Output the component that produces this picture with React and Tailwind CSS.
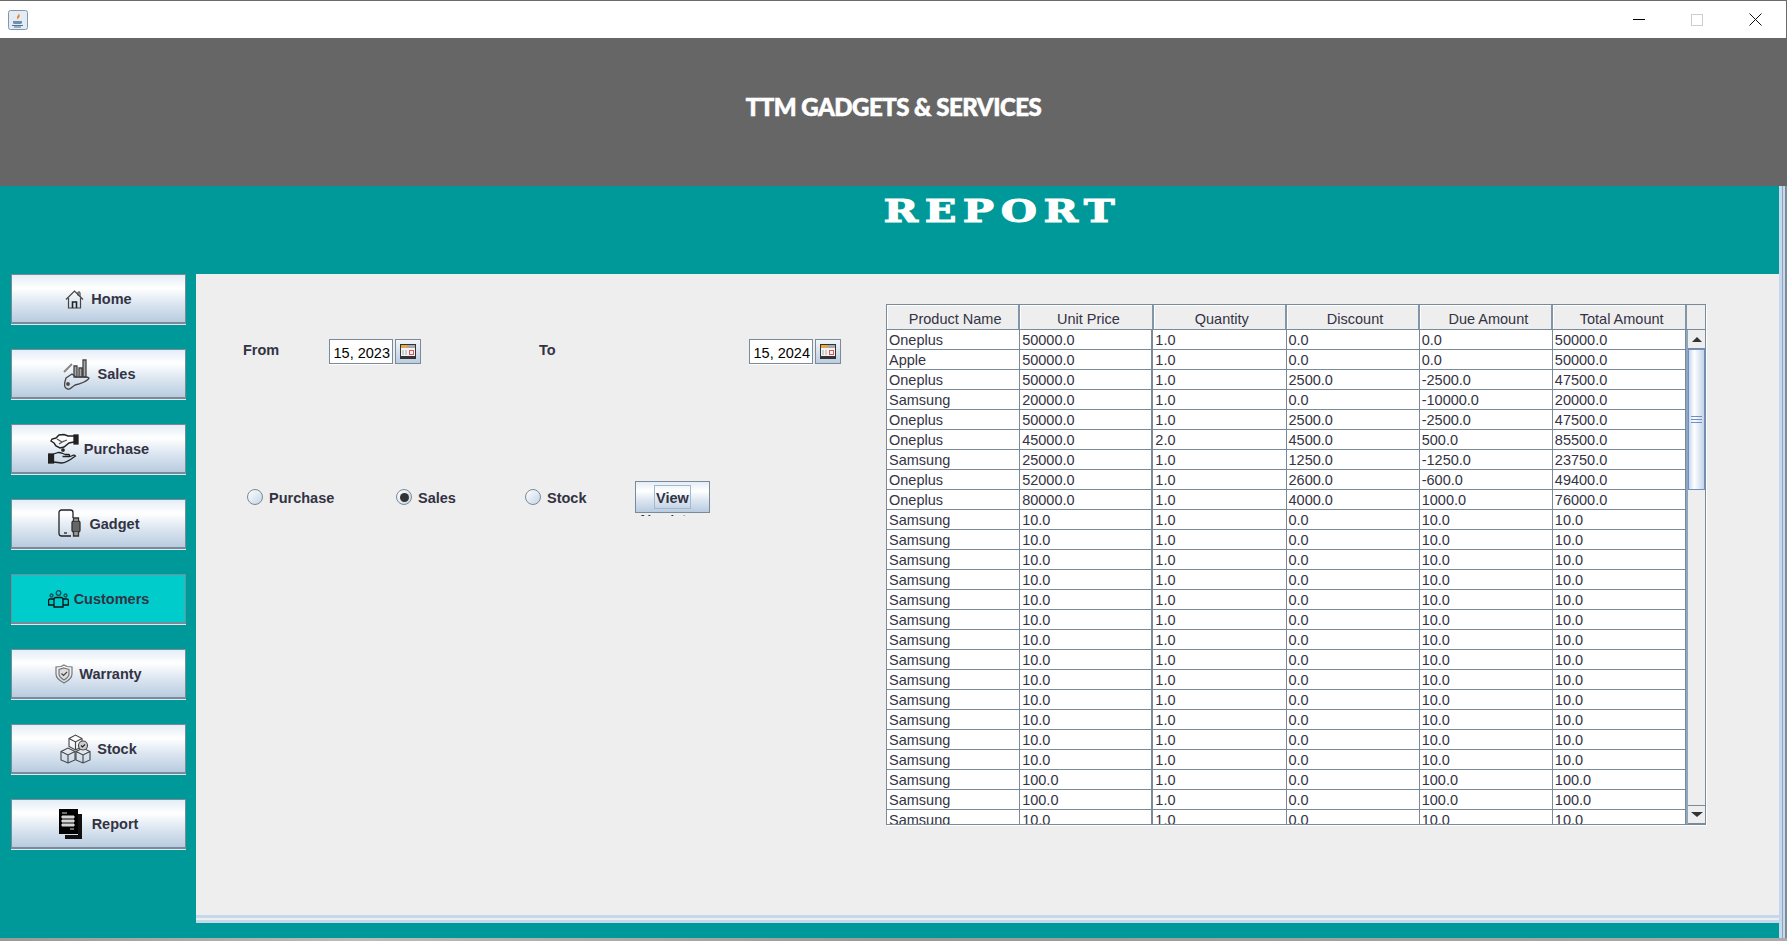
import React from 'react';

const navItems = [
    { label: 'Home', icon: HomeIcon, gap: 'gap-[7px]' },
    { label: 'Sales', icon: SalesIcon, gap: 'gap-[8px]' },
    { label: 'Purchase', icon: PurchaseIcon, gap: 'gap-[5px]' },
    { label: 'Gadget', icon: GadgetIcon, gap: 'gap-[8px]' },
    { label: 'Customers', icon: CustomersIcon, gap: 'gap-[5px]', active: true },
    { label: 'Warranty', icon: WarrantyIcon, gap: 'gap-[6px]' },
    { label: 'Stock', icon: StockIcon, gap: 'gap-[6px]' },
    { label: 'Report', icon: ReportIcon, gap: 'gap-[9px]' },
];

const columns = ['Product Name', 'Unit Price', 'Quantity', 'Discount', 'Due Amount', 'Total Amount'];

const smallRow = ['Samsung', '10.0', '1.0', '0.0', '10.0', '10.0'];
const bigRow = ['Samsung', '100.0', '1.0', '0.0', '100.0', '100.0'];

const rows = [
    ['Oneplus', '50000.0', '1.0', '0.0', '0.0', '50000.0'],
    ['Apple', '50000.0', '1.0', '0.0', '0.0', '50000.0'],
    ['Oneplus', '50000.0', '1.0', '2500.0', '-2500.0', '47500.0'],
    ['Samsung', '20000.0', '1.0', '0.0', '-10000.0', '20000.0'],
    ['Oneplus', '50000.0', '1.0', '2500.0', '-2500.0', '47500.0'],
    ['Oneplus', '45000.0', '2.0', '4500.0', '500.0', '85500.0'],
    ['Samsung', '25000.0', '1.0', '1250.0', '-1250.0', '23750.0'],
    ['Oneplus', '52000.0', '1.0', '2600.0', '-600.0', '49400.0'],
    ['Oneplus', '80000.0', '1.0', '4000.0', '1000.0', '76000.0'],
    ...Array(13).fill(smallRow),
    bigRow,
    bigRow,
    smallRow,
];

function JavaIcon() {
    return (
        <svg width="20" height="20" viewBox="0 0 20 20">
            <rect x="0.5" y="0.5" width="19" height="19" rx="2" fill="#e4ebf3" stroke="#7d97b3" />
            <path d="M10.5 3c1 2-2 3-1.500 5 .3 1 1 1.500 1 1.500-.2-1.500 2.500-2.500 1.500-4.500-.2-.8-.6-1.500-1-2z" fill="#e8842c" />
            <path d="M5 11h9v1.500c0 1-1 1.500-2 1.500H7c-1 0-2-.5-2-1.500z" fill="#6f8fae" />
            <path d="M4 15.500h11M6 17h7" stroke="#4f7396" strokeWidth="1" />
        </svg>
    );
}

function HomeIcon() {
    return (
        <svg width="19" height="20" viewBox="0 0 19 20" fill="none" stroke="#444" strokeWidth="1.200">
            <path d="M1 10.500 9.500 2 18 10.500" />
            <path d="M3.500 9v10h12V9" />
            <path d="M13 3v3.500M15 3.500v4.500M13 3h2" />
            <path d="M7.500 19v-6h4v6" strokeWidth="1.600" stroke="#222" />
        </svg>
    );
}

function SalesIcon() {
    return (
        <svg width="28" height="32" viewBox="0 0 28 32" fill="none" stroke="#555" strokeWidth="1.300">
            <path d="M2 14 10 6" stroke="#888" strokeWidth="2" />
            <path d="M12 8h3v11h-3zM17 10h3v9h-3zM21 2h3v17h-3z" fill="#aaa" stroke="#444" />
            <path d="M4 20l6-4 4 3h9c2 0 3 0 4 1-1 3-9 6-14 7l-4 3c-2 2-5 1-6-1-1-2 0-6 1-9z" stroke="#444" />
            <circle cx="6" cy="26" r="1.300" fill="#333" />
        </svg>
    );
}

function PurchaseIcon() {
    return (
        <svg width="31" height="32" viewBox="0 0 31 32" fill="none" stroke="#222" strokeWidth="1.300">
            <rect x="26" y="2" width="4" height="9" fill="#222" />
            <path d="M26 3h-6l-4-1.500-5 .5-3 3-4 1-1 2 3 2 2 3 4 2 4-1 5-4 5-1" strokeWidth="1.400" />
            <path d="M9 6l5 3 5-2M11 11l5-3" stroke="#555" />
            <rect x="0.500" y="21" width="5" height="9" fill="#222" />
            <path d="M5.500 21l5-1.500c3 0 5 1.500 7 2h3c1.500 0 1.500 2 0 2h-6M5.500 29l8 1c4 0 10-4 14-7-1-1.500-2.500-1-4 0l-3 1" />
            <circle cx="15" cy="17" r="1.200" fill="#222" />
        </svg>
    );
}

function GadgetIcon() {
    return (
        <svg width="24" height="29" viewBox="0 0 24 29" fill="none" stroke="#222" strokeWidth="1.300">
            <path d="M13 27H3.500C2 27 1 26 1 24.500v-21C1 2 2 1 3.500 1h9C14 1 15 2 15 3.500V9" />
            <path d="M6 24h3" />
            <rect x="14" y="12" width="8" height="11" rx="2" fill="#666" stroke="#333" />
            <path d="M15.500 12V9h5v3M15.500 23v4h5v-4" fill="#999" stroke="#333" />
        </svg>
    );
}

function CustomersIcon() {
    return (
        <svg width="21" height="18" viewBox="0 0 21 18" fill="none" stroke="#111" strokeWidth="1.300">
            <circle cx="10.500" cy="3" r="2.300" stroke="#0a4f55" />
            <circle cx="3.500" cy="5.500" r="1.500" stroke="#0a4f55" />
            <circle cx="17.500" cy="5.500" r="1.500" stroke="#0a4f55" />
            <path d="M6 17V9.500c0-1 1-2 2-2h5c1 0 2 1 2 2V17z" />
            <path d="M6 9H2c-.8 0-1.400.6-1.400 1.500V15H6M15 9h4c.8 0 1.400.6 1.400 1.500V15H15" />
        </svg>
    );
}

function WarrantyIcon() {
    return (
        <svg width="18" height="20" viewBox="0 0 18 20" fill="none" stroke="#777" strokeWidth="1.200">
            <path d="M9 1l3 1.500 5 .5v7c0 4-4 7-8 9-4-2-8-5-8-9V3l5-.5z" />
            <path d="M9 4l5 1.500V10c0 3-2.500 4.500-5 6-2.500-1.500-5-3-5-6V5.500z" fill="#ddd" />
            <path d="M6.500 9.500l2 2 3.500-3.500" stroke="#444" />
        </svg>
    );
}

function StockIcon() {
    return (
        <svg width="31" height="31" viewBox="0 0 31 31" fill="none" stroke="#444" strokeWidth="1.100">
            <path d="M9 5.500 15.500 2 22 5.500v8l-6.500 3.500L9 13.500z" />
            <path d="M9 5.500 15.500 9 22 5.500M15.500 9v8" />
            <path d="M1 18.500 8 15l7 3.500v8.500L8 30l-7-3z" />
            <path d="M1 18.500 8 22l7-3.500M8 22v8" />
            <path d="M16 18.500 23 15l7 3.500v8.500L23 30l-7-3z" />
            <path d="M16 18.500 23 22l7-3.500M23 22v8" />
            <circle cx="23" cy="12.500" r="4.500" fill="#ccc" stroke="#444" />
            <path d="M21 12.500l1.500 1.500 2.500-2.500" stroke="#222" />
        </svg>
    );
}

function ReportIcon() {
    return (
        <svg width="24" height="30" viewBox="0 0 24 30">
            <path d="M19 5h4v25H6v-4h13z" fill="#111" />
            <path d="M0 0h19v25H0z" fill="#000" />
            <path d="M3 4h5M3 7h12v2H3zM3 11h12v2H3zM3 15h12v2H3zM11 20h4" stroke="#ddd" strokeWidth="1" fill="#ccc" />
        </svg>
    );
}

function CalendarIcon() {
    return (
        <svg width="16" height="15" viewBox="0 0 16 15">
            <rect x="0.500" y="0.500" width="15" height="14" fill="#f4f4f4" stroke="#333" />
            <rect x="1" y="1" width="14" height="3" fill="#a9a9a9" />
            <rect x="1" y="1" width="6" height="3" fill="#e8a93a" />
            <rect x="1" y="12" width="14" height="2" fill="#333" />
            <path d="M3 6v5M6 6v5" stroke="#aaa" />
            <rect x="9.500" y="6.500" width="4" height="4" fill="none" stroke="#e2545a" />
        </svg>
    );
}

function NavButton({ label, icon: Icon, gap, active }) {
    const skin = active
        ? 'bg-[#00cccc]'
        : 'bg-[linear-gradient(180deg,#e4edf6_0%,#ffffff_28%,#dbe5f0_62%,#b8cce0_100%)]';
    return (
        <button className={`w-[175px] h-[50px] flex items-center justify-center ${gap} border border-[#7a8a99] border-b-2 shadow-[0_1px_0_#dfe8ef] text-[14.5px] font-bold text-[#333344] ${skin}`}>
            <Icon />
            <span className="pt-[3px]">{label}</span>
        </button>
    );
}

function DateField({ value }) {
    return (
        <div className="flex items-stretch gap-[2px] h-[25px]">
            <div className="w-[64px] bg-white border border-[#7a8a99] shadow-[0_1px_0_#fff] text-[14.5px] font-normal leading-[27px] text-right pr-[2px] text-black whitespace-nowrap overflow-hidden">
                {value}
            </div>
            <div className="w-[26px] flex items-center justify-center border border-[#7a8a99] bg-[linear-gradient(180deg,#f2f6fa,#b9cde1)]">
                <CalendarIcon />
            </div>
        </div>
    );
}

function Radio({ label, checked, className }) {
    return (
        <div className={`flex items-center gap-[6px] ${className}`}>
            <span className="w-[16px] h-[16px] mt-[-3px] rounded-full border border-[#7a8a99] bg-[linear-gradient(135deg,#ffffff,#c4d5e6)] flex items-center justify-center shrink-0">
                {checked && <span className="w-[9px] h-[9px] rounded-full bg-[#333]" />}
            </span>
            <span className="text-[14.5px] font-bold text-[#333344] pt-[1px]">{label}</span>
        </div>
    );
}

function ScrollBar() {
    return (
        <div className="w-[19px] flex flex-col bg-[#eeeeee] border-l-2 border-[#8fa6bf]">
            <div className="h-[19px] flex items-center justify-center border-b border-[#7a8a99]">
                <span className="w-0 h-0 border-x-[5px] border-x-transparent border-b-[5px] border-b-[#333]" />
            </div>
            <div className="h-[141px] flex flex-col items-center justify-center gap-[2px] border border-[#6d8ec9] bg-[linear-gradient(90deg,#c8d8ec,#ffffff_35%,#c3d4e8)]">
                <span className="w-[11px] h-px bg-[#6d8ec9]" />
                <span className="w-[11px] h-px bg-[#6d8ec9]" />
                <span className="w-[11px] h-px bg-[#6d8ec9]" />
            </div>
            <div className="flex-1" />
            <div className="h-[19px] flex items-center justify-center border-y border-[#7a8a99]">
                <span className="w-0 h-0 border-x-[6px] border-x-transparent border-t-[5px] border-t-[#333]" />
            </div>
        </div>
    );
}

function ReportTable() {
    return (
        <div className="w-[820px] h-[521px] border border-[#7a8a99] shadow-[1px_1px_0_#fff] flex flex-col bg-[#eeeeee] text-[14.5px] text-[#333344] overflow-hidden">
            <div className="flex h-[25px] shrink-0 border-b border-[#7a8a99]">
                {columns.map((name) => (
                    <div key={name} className="w-[133.300px] h-full flex items-center justify-center border-r-2 border-[#8296aa] shadow-[inset_1px_1px_0_#fff] pt-[5px] pl-[5px]">
                        {name}
                    </div>
                ))}
                <div className="flex-1" />
            </div>
            <div className="flex flex-1 min-h-0">
                <div className="w-[800px] bg-white overflow-hidden">
                    {rows.map((row, i) => (
                        <div key={i} className="flex h-[20px] border-b border-[#7a8a99]">
                            {row.map((cell, j) => (
                                <div key={j} className={`w-[133.300px] border-[#7a8a99] pl-[2px] leading-[20px] whitespace-nowrap overflow-hidden ${j === 1 ? 'border-r-2' : 'border-r'}`}>
                                    {cell}
                                </div>
                            ))}
                        </div>
                    ))}
                </div>
                <ScrollBar />
            </div>
        </div>
    );
}

export default function App() {
    return (
        <div className="w-[1787px] h-[941px] overflow-hidden flex flex-col bg-[#009999] font-['Liberation_Sans',Arial,sans-serif]">
            {/* Window title bar */}
            <div className="h-[38px] shrink-0 bg-white border-t border-r border-[#6b6b6b] flex items-center justify-between pl-[8px] pr-[2px]">
                <JavaIcon />
                <div className="flex items-center">
                    <span className="w-[58px] flex justify-center"><span className="w-[12px] h-px bg-black" /></span>
                    <span className="w-[58px] flex justify-center"><span className="w-[12px] h-[12px] border border-[#cccccc]" /></span>
                    <span className="w-[58px] flex justify-center">
                        <svg width="13" height="13" viewBox="0 0 13 13" stroke="#111" strokeWidth="1"><path d="M.5.500l12 12M12.500.500l-12 12" /></svg>
                    </span>
                </div>
            </div>

            <div className="h-[148px] shrink-0 bg-[#666666] flex items-center justify-center pb-[10px]">
                <h1 className="text-[24px] font-black text-white font-['Lato',sans-serif] tracking-[-0.5px] [-webkit-text-stroke:0.6px_white]">TTM GADGETS &amp; SERVICES</h1>
            </div>

            <div className="flex flex-1 min-h-0">
                <div className="flex-1 flex flex-col min-w-0">
                    <div className="h-[88px] shrink-0 flex justify-center pl-[225px]">
                        <h2 className="text-[32px] leading-[32px] mt-[9px] font-bold text-white font-['DejaVu_Serif',serif] tracking-[5px] scale-x-[1.3] [-webkit-text-stroke:1px_white]">REPORT</h2>
                    </div>
                    <div className="flex flex-1 min-h-0 mb-[15px]">
                        <div className="w-[196px] shrink-0 pl-[11px] flex flex-col gap-[25px]">
                            {navItems.map((item) => (
                                <NavButton key={item.label} {...item} />
                            ))}
                        </div>
                        <div className="flex-1 bg-[#eeeeee] border-b-[8px] border-[#c6d8ec] [border-bottom-style:double] flex">
                            <div className="w-[690px] shrink-0 pl-[47px] pt-[65px]">
                                <div className="flex items-start text-[14.5px] font-bold text-[#333344]">
                                    <span className="w-[86px] mt-[1px]">From</span>
                                    <DateField value="15, 2023" />
                                    <span className="ml-[118px] w-[210px] mt-[1px]">To</span>
                                    <DateField value="15, 2024" />
                                </div>
                                <div className="flex items-center mt-[117px] ml-[4px]">
                                    <Radio label="Purchase" className="w-[149px]" />
                                    <Radio label="Sales" checked className="w-[129px]" />
                                    <Radio label="Stock" className="w-[110px]" />
                                    <div className="flex flex-col">
                                        <button className="w-[75px] h-[32px] flex items-center justify-center border border-[#7a8a99] bg-[linear-gradient(180deg,#e4edf6,#ffffff_30%,#dbe5f0_62%,#b8cce0)] text-[14.5px] font-bold text-[#333344]">
                                            <span className="px-[1px] border border-[#a3b8cc] h-[24px] leading-[24px]">View</span>
                                        </button>
                                        <div className="h-[3px] overflow-hidden text-[13px] leading-[13px] font-bold text-[#333] pl-[3px]">Absolute</div>
                                    </div>
                                </div>
                            </div>
                            <div className="pt-[30px]">
                                <ReportTable />
                            </div>
                        </div>
                    </div>
                </div>
                {/* Outer frame of the inner window */}
                <div className="w-[8px] shrink-0 bg-[#c6d8ec] border-r-2 border-[#7a8a99] flex justify-center">
                    <span className="w-px h-full bg-[#8fa6bf]" />
                </div>
            </div>

            <div className="h-[3px] shrink-0 bg-[linear-gradient(90deg,#999_0%,#bbb_20%,#999_50%,#aaa_100%)]" />
        </div>
    );
}
